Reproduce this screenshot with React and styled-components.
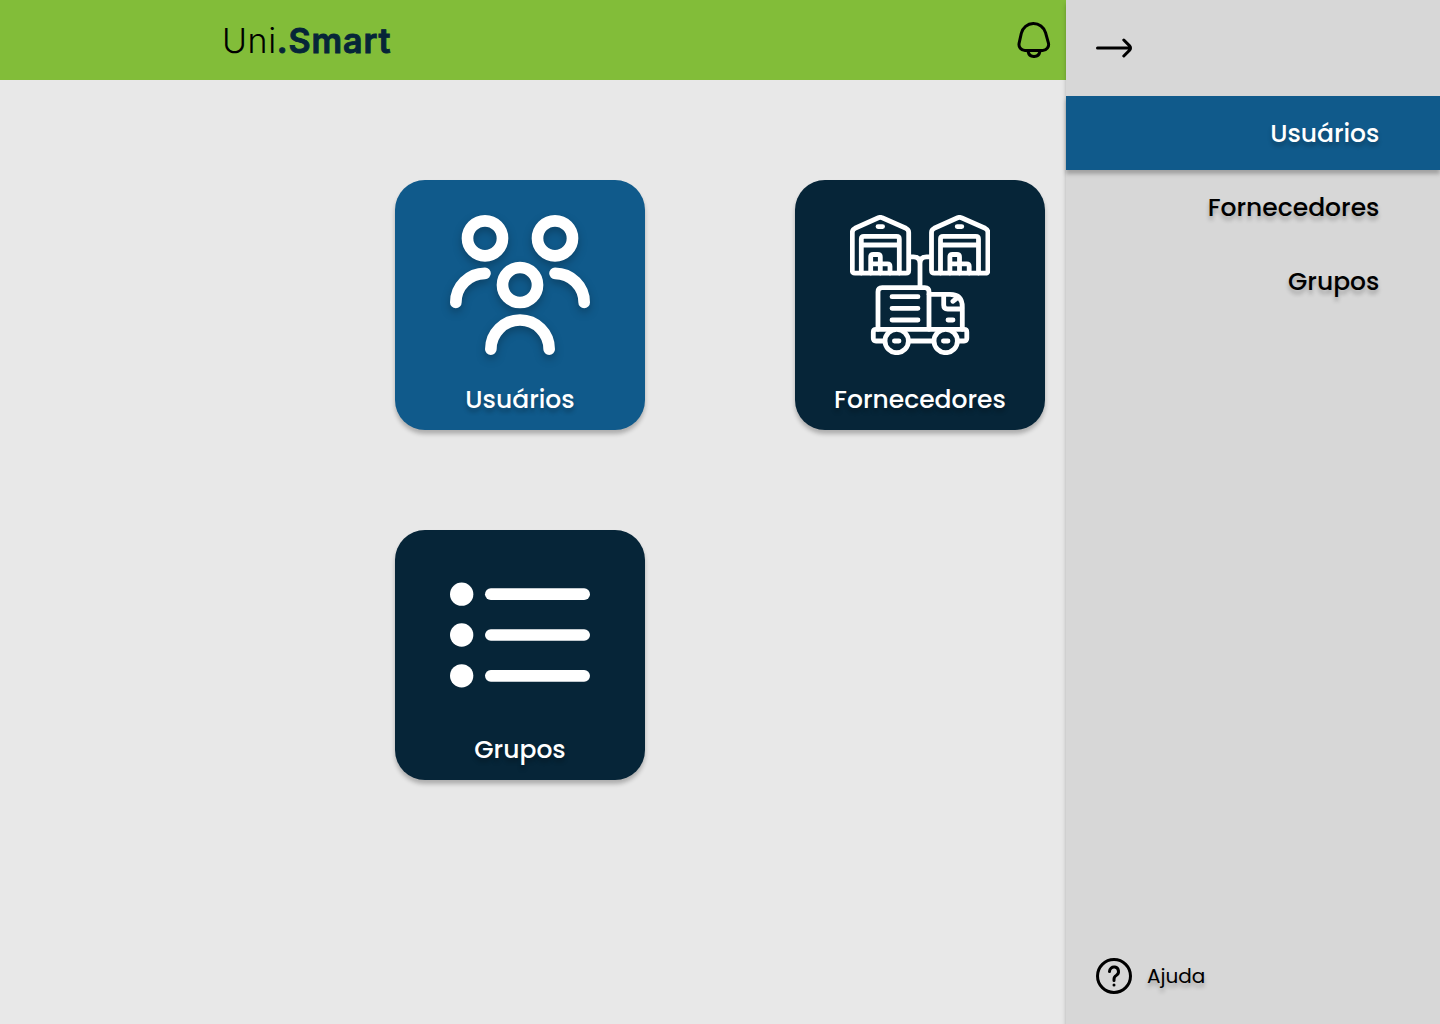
import React from 'react';
import styled, { createGlobalStyle } from 'styled-components';

const GlobalStyle = createGlobalStyle`
  * { box-sizing: border-box; }
  body { margin: 0; font-family: Poppins, Inter, "Open Sans", sans-serif; }
  svg { display: block; flex: none; }
`;

const Page = styled.div`
  display: flex;
  width: 1440px;
  height: 1024px;
  overflow: hidden;
  background: #e8e8e8;
`;

const Content = styled.div`
  flex: 1;
  display: flex;
  flex-direction: column;
`;

const Header = styled.header`
  height: 80px;
  padding: 0 14px 0 222px;
  display: flex;
  align-items: center;
  justify-content: space-between;
  background: #82bd39;
`;

const Logo = styled.h1`
  margin: 0;
  padding-top: 1px;
  display: flex;
  font-family: Inter, sans-serif;
  font-size: 34px;
  line-height: 40px;
  color: #000;
`;

const LogoLight = styled.span`
  font-weight: 300;
  letter-spacing: 0.6px;
`;

const LogoBold = styled.span`
  font-weight: 600;
  letter-spacing: 0.9px;
  color: #062538;
  -webkit-text-stroke: 0.9px #062538;
`;

const Cards = styled.main`
  display: grid;
  grid-template-columns: repeat(2, 250px);
  grid-auto-rows: 250px;
  gap: 100px 150px;
  padding: 100px 0 0 395px;
`;

const Card = styled.section`
  display: flex;
  flex-direction: column;
  align-items: center;
  gap: 29px;
  padding-top: 35px;
  border-radius: 30px;
  color: #fff;
  background: ${(p) => (p.$active ? '#105a8b' : '#062538')};
  box-shadow: 0 4px 4px rgba(0, 0, 0, 0.25);

  svg { filter: ${(p) => (p.$active ? 'drop-shadow(0 4px 4px rgba(0, 0, 0, 0.25))' : 'none')}; }
`;

const Label = styled.span`
  font-size: 25px;
  font-weight: 500;
  line-height: 32px;
  white-space: nowrap;
  text-shadow: 0 4px 4px rgba(0, 0, 0, 0.25);
`;

const Sidebar = styled.aside`
  position: relative;
  width: 374px;
  display: flex;
  flex-direction: column;
  background: #d7d7d7;
  box-shadow: 0 4px 4px rgba(0, 0, 0, 0.25);
`;

const Collapse = styled.div`
  height: 96px;
  padding-left: 30px;
  display: flex;
  align-items: center;
`;

const Nav = styled.nav`
  flex: 1;
`;

const NavItem = styled.div`
  height: 74px;
  padding: 2px 60.6px 0 0;
  display: flex;
  align-items: center;
  justify-content: flex-end;
  color: ${(p) => (p.$active ? '#fff' : '#000')};
  background: ${(p) => (p.$active ? '#105a8b' : 'transparent')};
  box-shadow: ${(p) => (p.$active ? '0 4px 4px rgba(0, 0, 0, 0.25)' : 'none')};
`;

const Help = styled.div`
  display: flex;
  align-items: center;
  gap: 15px;
  padding: 0 0 30px 30px;
`;

const HelpLabel = styled.span`
  font-size: 20px;
  line-height: 30px;
  text-shadow: 0 4px 4px rgba(0, 0, 0, 0.25);
`;

const BellIcon = () => (
  <svg width="36" height="36" viewBox="0 0 24 24">
    <path d="M22.555,13.662l-1.9-6.836A9.321,9.321,0,0,0,2.576,7.3L1.105,13.915A5,5,0,0,0,5.986,20H7.1a5,5,0,0,0,9.8,0h.838a5,5,0,0,0,4.818-6.338ZM12,22a3,3,0,0,1-2.816-2h5.632A3,3,0,0,1,12,22Zm8.126-5.185A2.977,2.977,0,0,1,17.737,18H5.986a3,3,0,0,1-2.928-3.651l1.47-6.616a7.321,7.321,0,0,1,14.2-.372l1.9,6.836A2.977,2.977,0,0,1,20.126,16.815Z" />
  </svg>
);

const ArrowIcon = () => (
  <svg width="36" height="36" viewBox="0 0 24 24">
    <path d="M23.12,9.91,19.25,6a1,1,0,0,0-1.42,0h0a1,1,0,0,0,0,1.41L21.39,11H1a1,1,0,0,0-1,1H0a1,1,0,0,0,1,1H21.45l-3.62,3.61a1,1,0,0,0,0,1.42h0a1,1,0,0,0,1.42,0l3.87-3.88A3,3,0,0,0,23.12,9.91Z" />
  </svg>
);

const HelpIcon = () => (
  <svg width="36" height="36" viewBox="0 0 24 24">
    <circle cx="12" cy="12" r="11" fill="none" stroke="#000" strokeWidth="2" />
    <path d="M12.717,5.063A4,4,0,0,0,8,9a1,1,0,0,0,2,0,2,2,0,0,1,2.371-1.967,2.024,2.024,0,0,1,1.6,1.595,2,2,0,0,1-1,2.125A3.954,3.954,0,0,0,11,14.257V15a1,1,0,0,0,2,0v-.743a1.982,1.982,0,0,1,.93-1.752,4,4,0,0,0-1.213-7.442Z" />
    <circle cx="12" cy="18" r="1" />
  </svg>
);

const UsersIcon = () => (
  <svg width="140" height="140" viewBox="0 0 24 24" fill="none" stroke="#fff" strokeWidth="2" strokeLinecap="round">
    <circle cx="6" cy="4" r="3" />
    <circle cx="18" cy="4" r="3" />
    <circle cx="12" cy="12" r="3" />
    <path d="M6 10a5 5 0 0 0-5 5" />
    <path d="M18 10a5 5 0 0 1 5 5" />
    <path d="M7 23a5 5 0 0 1 10 0" />
  </svg>
);

const Warehouse = () => (
  <>
    <path d="M2.3 17.5Q2.3 14.6 5 13.3L28.4 2.8Q30.3 1.9 32.2 2.8L56 13.3Q58.7 14.6 58.7 17.5V55.5Q58.7 58.2 56 58.2H5Q2.3 58.2 2.3 55.5Z" />
    <path d="M11.3 58V24Q11.3 21.3 14 21.3H46.6Q49.3 21.3 49.3 24V58M11.3 30H49.3M28 11.6H32.6" />
    <path d="M20.7 58V42Q20.7 39.5 23.2 39.5H27.8Q30.3 39.5 30.3 42V58M20.7 48.8H37.5Q40 48.8 40 51.3V58" />
  </>
);

const SuppliersIcon = () => (
  <svg width="140" height="140" viewBox="0 0 140 140" fill="none" stroke="#fff" strokeWidth="4.8" strokeLinecap="round" strokeLinejoin="round">
    <Warehouse />
    <g transform="translate(79.2 0)"><Warehouse /></g>
    <path d="M60.5 41.9H63.5Q70 41.9 70 48.4V71M79.5 41.9H76.5Q70 41.9 70 48.4" />
    <path d="M28 114.3V76.8Q28 72.6 32.2 72.6H74.8Q79 72.6 79 76.8V114.3" />
    <path d="M42 81.7H68M42 93.3H68M42 105H68" />
    <path d="M79 79.3H100Q112.3 79.3 112.3 92V114.3M93.7 79.3V90Q93.7 94 97.7 94H112.3M102.8 86.3L107 83M98 105H103" />
    <path d="M35 126H26Q23.3 126 23.3 123.3V117Q23.3 114.3 26 114.3H114.1Q116.8 114.3 116.8 117V123.3Q116.8 126 114.1 126H107.4M58.4 126H84" />
    <circle cx="46.7" cy="126" r="11.7" fill="#062538" />
    <circle cx="95.7" cy="126" r="11.7" fill="#062538" />
    <path d="M44.4 126H49M93.4 126H98" />
  </svg>
);

const GroupsIcon = () => (
  <svg width="140" height="140" viewBox="0 0 24 24" fill="#fff">
    {[5, 12, 19].map((y) => (
      <React.Fragment key={y}>
        <circle cx="2" cy={y} r="2" />
        <rect x="6" y={y - 1} width="18" height="2" rx="1" />
      </React.Fragment>
    ))}
  </svg>
);

const sections = [
  { name: 'Usuários', Icon: UsersIcon, active: true },
  { name: 'Fornecedores', Icon: SuppliersIcon },
  { name: 'Grupos', Icon: GroupsIcon },
];

export default function App() {
  return (
    <>
      <GlobalStyle />
      <Page>
        <Content>
          <Header>
            <Logo>
              <LogoLight>Uni</LogoLight>
              <LogoBold>.Smart</LogoBold>
            </Logo>
            <BellIcon />
          </Header>
          <Cards>
            {sections.map(({ name, Icon, active }) => (
              <Card key={name} $active={active}>
                <Icon />
                <Label>{name}</Label>
              </Card>
            ))}
          </Cards>
        </Content>
        <Sidebar>
          <Collapse>
            <ArrowIcon />
          </Collapse>
          <Nav>
            {sections.map(({ name, active }) => (
              <NavItem key={name} $active={active}>
                <Label>{name}</Label>
              </NavItem>
            ))}
          </Nav>
          <Help>
            <HelpIcon />
            <HelpLabel>Ajuda</HelpLabel>
          </Help>
        </Sidebar>
      </Page>
    </>
  );
}
